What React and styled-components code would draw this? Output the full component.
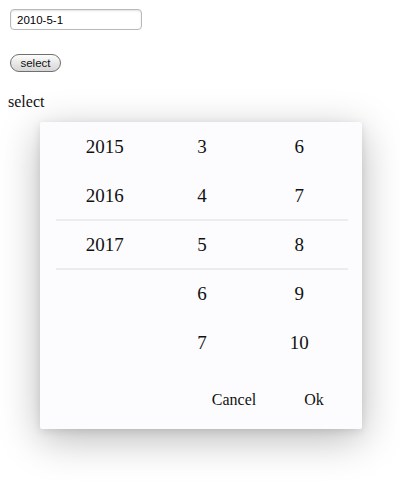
import React from 'react';
import styled, { createGlobalStyle } from 'styled-components';

const GlobalStyle = createGlobalStyle`
  html, body {
    margin: 0;
    background: #ffffff;
  }
  body {
    font-family: "Liberation Serif", "Times New Roman", serif;
    color: #111;
  }
`;

const Page = styled.div`
  box-sizing: border-box;
  min-height: 498px;
  padding: 9px 8px 0;
  display: flex;
  flex-direction: column;
  align-items: flex-start;
`;

const DateInput = styled.input`
  box-sizing: border-box;
  margin: 0 0 0 2px;
  width: 132px;
  height: 21px;
  padding: 0 6px;
  border: 1px solid #b9b9b9;
  border-radius: 4px;
  box-shadow: inset 0 1px 2px rgba(0, 0, 0, 0.12);
  font-family: "Liberation Sans", Arial, sans-serif;
  font-size: 11.5px;
  color: #000;
  outline: none;
`;

const PillButton = styled.button`
  box-sizing: border-box;
  margin: 24px 0 0 2px;
  width: 51px;
  height: 18px;
  padding: 0;
  border: 1px solid #6f6f6f;
  border-radius: 9px;
  background: linear-gradient(#fdfdfd, #e4e4e4 60%, #d6d6d6);
  font-family: "Liberation Sans", Arial, sans-serif;
  font-size: 11.5px;
  color: #111;
`;

const Label = styled.div`
  margin-top: 21px;
  font-size: 16px;
  line-height: 18px;
`;

const Dialog = styled.div`
  box-sizing: border-box;
  margin: 11px 0 0 32px;
  width: 322px;
  height: 307px;
  background: #fcfcfe;
  border-radius: 2px;
  box-shadow: 0 10px 40px rgba(0, 0, 0, 0.28), 0 2px 8px rgba(0, 0, 0, 0.1);
  display: flex;
  flex-direction: column;
`;

const Wheels = styled.div`
  position: relative;
  margin: 0 14px 0 16px;
  display: grid;
  grid-template-columns: repeat(3, 1fr);
`;

const Column = styled.div`
  display: flex;
  flex-direction: column;
`;

const Cell = styled.div`
  height: 49px;
  display: flex;
  align-items: center;
  justify-content: center;
  font-size: 19px;
  color: #111;
`;

const Divider = styled.div`
  position: absolute;
  left: 0;
  right: 0;
  top: ${({ top }) => top}px;
  height: 2px;
  background: #ececf0;
`;

const Actions = styled.div`
  flex: 1;
  display: flex;
  justify-content: flex-end;
  align-items: center;
  gap: 16px;
  padding: 4px 16px 0 0;
`;

const ActionButton = styled.button`
  width: 64px;
  height: 36px;
  padding: 0;
  border: none;
  background: transparent;
  font-family: "Liberation Serif", "Times New Roman", serif;
  font-size: 16px;
  color: #111;
`;

const columns = [
  ['2015', '2016', '2017', '', ''],
  ['3', '4', '5', '6', '7'],
  ['6', '7', '8', '9', '10'],
];

export default function App() {
  return (
    <>
      <GlobalStyle />
      <Page>
        <DateInput defaultValue="2010-5-1" />
        <PillButton>select</PillButton>
        <Label>select</Label>
        <Dialog>
          <Wheels>
            {columns.map((items, i) => (
              <Column key={i}>
                {items.map((v, j) => (
                  <Cell key={j}>{v}</Cell>
                ))}
              </Column>
            ))}
            <Divider top={97} />
            <Divider top={146} />
          </Wheels>
          <Actions>
            <ActionButton>Cancel</ActionButton>
            <ActionButton>Ok</ActionButton>
          </Actions>
        </Dialog>
      </Page>
    </>
  );
}
